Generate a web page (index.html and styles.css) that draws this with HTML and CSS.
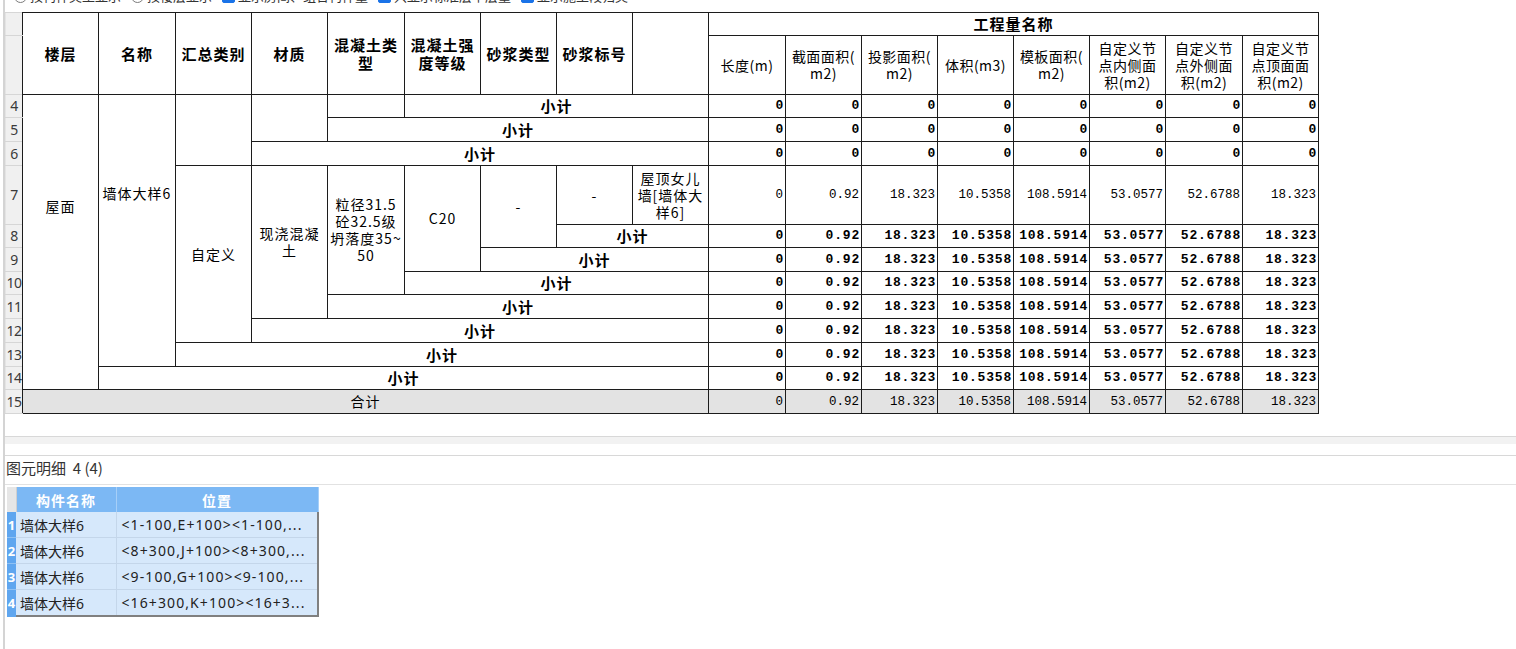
FILE: index.html
```html
<!DOCTYPE html>
<html lang="zh-CN">
<head>
<meta charset="utf-8">
<title>查看工程量</title>
<link rel="stylesheet" href="styles.css">
</head>
<body>
<div class="page">
  <div class="toolbar">
    <div class="toolbar-inner">
      <span class="opt"><span class="radio"></span>按构件类型显示</span>
      <span class="opt"><span class="radio"></span>按楼层显示</span>
      <span class="opt"><span class="check on"></span>显示房间、组合构件量</span>
      <span class="opt"><span class="check on"></span>只显示标准层单层量</span>
      <span class="opt"><span class="check on"></span>显示施工段归类</span>
    </div>
  </div>

  <table class="sheet">
    <colgroup>
      <col class="w17"><col class="w76"><col class="w77"><col class="w76"><col class="w76"><col class="w77"><col class="w76"><col class="w76"><col class="w76"><col class="w76"><col class="w77"><col class="w76"><col class="w76"><col class="w76"><col class="w76"><col class="w76"><col class="w77"><col class="w76">
    </colgroup>
    <tr class="r23">
      <td class="rh"></td>
      <td class="th" rowspan="2">楼层</td>
      <td class="th" rowspan="2">名称</td>
      <td class="th" rowspan="2">汇总类别</td>
      <td class="th" rowspan="2">材质</td>
      <td class="th" rowspan="2">混凝土类<br>型</td>
      <td class="th" rowspan="2">混凝土强<br>度等级</td>
      <td class="th" rowspan="2">砂浆类型</td>
      <td class="th" rowspan="2">砂浆标号</td>
      <td class="th" rowspan="2"></td>
      <td class="th" colspan="8">工程量名称</td>
    </tr>
    <tr class="r59">
      <td class="rh"></td>
      <td class="sh">长度(m)</td>
      <td class="sh">截面面积(<br>m2)</td>
      <td class="sh">投影面积(<br>m2)</td>
      <td class="sh">体积(m3)</td>
      <td class="sh">模板面积(<br>m2)</td>
      <td class="sh">自定义节<br>点内侧面<br>积(m2)</td>
      <td class="sh">自定义节<br>点外侧面<br>积(m2)</td>
      <td class="sh">自定义节<br>点顶面面<br>积(m2)</td>
    </tr>
    <tr class="r23">
      <td class="rh">4</td>
      <td class="tx up-a" rowspan="11">屋面</td>
      <td class="tx up-b" rowspan="10">墙体大样6</td>
      <td class="tx" rowspan="3"></td>
      <td class="tx" rowspan="2"></td>
      <td class="tx"></td>
      <td class="sub" colspan="4">小计</td>
      <td class="n b">0</td><td class="n b">0</td><td class="n b">0</td><td class="n b">0</td><td class="n b">0</td><td class="n b">0</td><td class="n b">0</td><td class="n b">0</td>
    </tr>
    <tr class="r24">
      <td class="rh">5</td>
      <td class="sub" colspan="5">小计</td>
      <td class="n b">0</td><td class="n b">0</td><td class="n b">0</td><td class="n b">0</td><td class="n b">0</td><td class="n b">0</td><td class="n b">0</td><td class="n b">0</td>
    </tr>
    <tr class="r24">
      <td class="rh">6</td>
      <td class="sub" colspan="6">小计</td>
      <td class="n b">0</td><td class="n b">0</td><td class="n b">0</td><td class="n b">0</td><td class="n b">0</td><td class="n b">0</td><td class="n b">0</td><td class="n b">0</td>
    </tr>
    <tr class="r59">
      <td class="rh">7</td>
      <td class="tx" rowspan="6">自定义</td>
      <td class="tx" rowspan="5">现浇混凝<br>土</td>
      <td class="tx" rowspan="4">粒径31.5<br>砼32.5级<br>坍落度35~<br>50</td>
      <td class="tx" rowspan="3">C20</td>
      <td class="tx" rowspan="2">-</td>
      <td class="tx">-</td>
      <td class="tx">屋顶女儿<br>墙[墙体大<br>样6]</td>
      <td class="n">0</td><td class="n">0.92</td><td class="n">18.323</td><td class="n">10.5358</td><td class="n">108.5914</td><td class="n">53.0577</td><td class="n">52.6788</td><td class="n">18.323</td>
    </tr>
    <tr class="r23">
      <td class="rh">8</td>
      <td class="sub" colspan="2">小计</td>
      <td class="n b">0</td><td class="n b">0.92</td><td class="n b">18.323</td><td class="n b">10.5358</td><td class="n b">108.5914</td><td class="n b">53.0577</td><td class="n b">52.6788</td><td class="n b">18.323</td>
    </tr>
    <tr class="r24">
      <td class="rh">9</td>
      <td class="sub" colspan="3">小计</td>
      <td class="n b">0</td><td class="n b">0.92</td><td class="n b">18.323</td><td class="n b">10.5358</td><td class="n b">108.5914</td><td class="n b">53.0577</td><td class="n b">52.6788</td><td class="n b">18.323</td>
    </tr>
    <tr class="r23">
      <td class="rh">10</td>
      <td class="sub" colspan="4">小计</td>
      <td class="n b">0</td><td class="n b">0.92</td><td class="n b">18.323</td><td class="n b">10.5358</td><td class="n b">108.5914</td><td class="n b">53.0577</td><td class="n b">52.6788</td><td class="n b">18.323</td>
    </tr>
    <tr class="r24">
      <td class="rh">11</td>
      <td class="sub" colspan="5">小计</td>
      <td class="n b">0</td><td class="n b">0.92</td><td class="n b">18.323</td><td class="n b">10.5358</td><td class="n b">108.5914</td><td class="n b">53.0577</td><td class="n b">52.6788</td><td class="n b">18.323</td>
    </tr>
    <tr class="r24">
      <td class="rh">12</td>
      <td class="sub" colspan="6">小计</td>
      <td class="n b">0</td><td class="n b">0.92</td><td class="n b">18.323</td><td class="n b">10.5358</td><td class="n b">108.5914</td><td class="n b">53.0577</td><td class="n b">52.6788</td><td class="n b">18.323</td>
    </tr>
    <tr class="r24">
      <td class="rh">13</td>
      <td class="sub" colspan="7">小计</td>
      <td class="n b">0</td><td class="n b">0.92</td><td class="n b">18.323</td><td class="n b">10.5358</td><td class="n b">108.5914</td><td class="n b">53.0577</td><td class="n b">52.6788</td><td class="n b">18.323</td>
    </tr>
    <tr class="r23">
      <td class="rh">14</td>
      <td class="sub" colspan="8">小计</td>
      <td class="n b">0</td><td class="n b">0.92</td><td class="n b">18.323</td><td class="n b">10.5358</td><td class="n b">108.5914</td><td class="n b">53.0577</td><td class="n b">52.6788</td><td class="n b">18.323</td>
    </tr>
    <tr class="r24 total">
      <td class="rh">15</td>
      <td class="tx" colspan="9">合计</td>
      <td class="n">0</td><td class="n">0.92</td><td class="n">18.323</td><td class="n">10.5358</td><td class="n">108.5914</td><td class="n">53.0577</td><td class="n">52.6788</td><td class="n">18.323</td>
    </tr>
  </table>

  <div class="splitter"></div>

  <div class="detail">
    <div class="detail-title">图元明细&nbsp;&nbsp;4 (4)</div>
    <table class="grid">
      <colgroup><col class="g-rh"><col class="g-name"><col class="g-pos"></colgroup>
      <tr class="g-head">
        <td class="g-corner"></td>
        <td>构件名称</td>
        <td>位置</td>
      </tr>
      <tr class="g-row">
        <td class="g-num">1</td>
        <td>墙体大样6</td>
        <td class="g-last">&lt;1-100,E+100&gt;&lt;1-100,...</td>
      </tr>
      <tr class="g-row">
        <td class="g-num">2</td>
        <td>墙体大样6</td>
        <td class="g-last">&lt;8+300,J+100&gt;&lt;8+300,...</td>
      </tr>
      <tr class="g-row">
        <td class="g-num">3</td>
        <td>墙体大样6</td>
        <td class="g-last">&lt;9-100,G+100&gt;&lt;9-100,...</td>
      </tr>
      <tr class="g-row g-end">
        <td class="g-num">4</td>
        <td>墙体大样6</td>
        <td class="g-last">&lt;16+300,K+100&gt;&lt;16+3...</td>
      </tr>
    </table>
  </div>
</div>
</body>
</html>
```
FILE: styles.css
```css
html, body {
  margin: 0;
  padding: 0;
  background: #ffffff;
}

body {
  font-family: "Noto Sans CJK SC", "Noto Sans", sans-serif;
  color: #000;
  overflow: hidden;
}

.page {
  margin-left: 3px;
  border-left: 2px solid #d4d4d4;
  height: 649px;
  box-sizing: border-box;
}

/* top option strip (mostly scrolled out of view) */
.toolbar {
  height: 12px;
  overflow: hidden;
}

.toolbar-inner {
  display: flex;
  align-items: center;
  margin-top: -13px;
  padding-left: 9px;
  gap: 10px;
  font-size: 13px;
  color: #333;
  white-space: nowrap;
}

.opt {
  display: flex;
  align-items: center;
  gap: 3px;
  line-height: 18px;
}

.radio {
  width: 11px;
  height: 11px;
  border: 1px solid #7a7a7a;
  border-radius: 50%;
  background: #fff;
}

.check {
  width: 11px;
  height: 11px;
  border: 1px solid #7a7a7a;
  border-radius: 2px;
  background: #fff;
}

.check.on {
  background: #1a73e8;
  border-color: #1a73e8;
}

/* main statistics sheet */
.sheet {
  border-collapse: collapse;
  table-layout: fixed;
  width: 1314px;
}

.w17 { width: 17px; }
.w76 { width: 76px; }
.w77 { width: 77px; }

.r23 { height: 23px; }
.r24 { height: 24px; }
.r59 { height: 59px; }

.sheet td {
  border: 1px solid #1c1c1c;
  padding: 0 2px;
  font-size: 14px;
  letter-spacing: 1px;
  line-height: 16px;
  text-align: center;
  vertical-align: middle;
  overflow: hidden;
  white-space: nowrap;
}

.sheet td.rh {
  background: #f0f0f0;
  border-top: 1px solid #d6d6d6;
  border-bottom: 1px solid #d6d6d6;
  border-left: 1px solid #e4e4e4;
  border-right: 1px solid #1c1c1c;
  padding: 0;
  font-family: "Noto Sans", sans-serif;
  font-size: 14px;
  letter-spacing: -0.5px;
  color: #3a3a3a;
  text-align: center;
}

.sheet td.th {
  font-weight: bold;
  font-size: 15px;
  letter-spacing: 1px;
  line-height: 18px;
}

.sheet td.sh {
  font-size: 14px;
  letter-spacing: 0.5px;
  line-height: 17px;
}

.sheet td.sub {
  font-weight: bold;
  font-size: 15px;
  letter-spacing: 1px;
}

.sheet td.tx {
  line-height: 17px;
}

.sheet td.up-a {
  padding-bottom: 72px;
}

.sheet td.up-b {
  padding-bottom: 74px;
}

.sheet td.n {
  text-align: right;
  font-family: "Liberation Mono", monospace;
  font-size: 12.5px;
  letter-spacing: 0;
  padding-right: 2px;
}

.sheet td.n.b {
  font-weight: bold;
  font-size: 13px;
  letter-spacing: 0.8px;
  padding-right: 1px;
}

.sheet tr.total td {
  background: #e3e3e3;
}

.sheet tr.total td.rh {
  background: #f0f0f0;
}

/* splitter between panels */
.splitter {
  margin-top: 22px;
  height: 7px;
  border-top: 1px solid #d8d8d8;
  background: #f2f2f2;
}

.detail {
  margin-top: 11px;
  border-top: 1px solid #d8d8d8;
}

.detail-title {
  height: 29px;
  line-height: 24px;
  padding-left: 1px;
  font-size: 15px;
  color: #333;
  border-bottom: 1px solid #e2e2e2;
  box-sizing: border-box;
}

/* element detail grid */
.grid {
  margin-top: 2px;
  margin-left: 2px;
  border-collapse: collapse;
  table-layout: fixed;
  width: 311px;
  font-family: "Noto Sans", "Noto Sans CJK SC", sans-serif;
  font-size: 14px;
}

.g-rh { width: 9px; }
.g-name { width: 100px; }
.g-pos { width: 202px; }

.grid td {
  padding: 0 4px;
  white-space: nowrap;
  overflow: hidden;
}

.g-head td {
  height: 25px;
  background: #7cb8f4;
  color: #fff;
  font-weight: bold;
  text-align: center;
  letter-spacing: 1px;
  border-right: 1px solid #a6cff8;
}

.g-head td.g-corner {
  background: #e6e6e6;
  border-right: 1px solid #d0d0d0;
  padding: 0;
}

.g-row td {
  height: 25px;
  background: #d6e8fb;
  color: #222;
  border-bottom: 1px solid #c4d6ea;
  border-right: 1px solid #c4d6ea;
}

.g-row td.g-num {
  background: #5fa6ef;
  color: #fff;
  font-weight: bold;
  font-size: 13px;
  padding: 0;
  text-align: center;
  border-right: none;
  border-bottom: 1px solid #8fc1f3;
}

.g-row td.g-last {
  letter-spacing: 1.1px;
  padding-left: 5px;
  border-right: 2px solid #808080;
}

.g-end td {
  border-bottom: 2px solid #808080;
}

.g-end td.g-num {
  border-bottom: 2px solid #5fa6ef;
}
```
